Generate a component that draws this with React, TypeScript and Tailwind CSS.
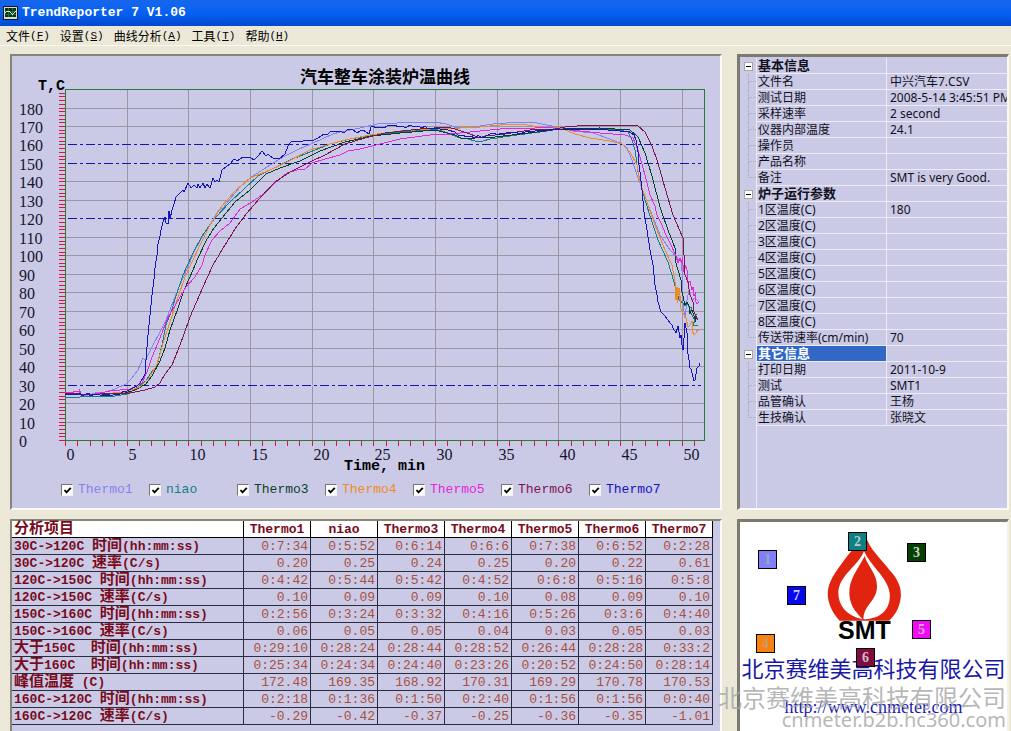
import React, { useState } from "react";

const MENU = [
  ["文件", "F"],
  ["设置", "S"],
  ["曲线分析", "A"],
  ["工具", "T"],
  ["帮助", "H"],
];

type Series = { name: string; stroke: string; text: string; points: string };

const SERIES: Series[] = [
  {
    name: "Thermo1",
    stroke: "#8484ee",
    text: "text-[#8484ee]",
    points:
      "65,393 78,394 85,396 95,393 105,392 115,389 126,384 132,378 138,370 143,358 145,360 148,355 152,347 160,332 166,320 173,302 179,287 187,269 194,252 202,237 213,220 218,211 223,208 230,199 240,187 250,178 267,167 283,157 297,150 313,143 333,134 340,132 360,128 377,124 397,123 420,122 435,122 446,124 457,128 473,127 493,124 520,122 537,123 557,127 573,131 593,133 610,139 622,144 627,148 632,160 637,175 641,186 650,210 660,235 670,250 681,262 683,280 682,296 685,318 687,300 689,290 692,300 695,298 699,302",
  },
  {
    name: "niao",
    stroke: "#138089",
    text: "text-[#138089]",
    points:
      "65,397 80,397 90,396 105,397 115,396 127,394 138,387 146,381 150,374 157,366 162,345 166,325 171,312 177,293 183,275 192,255 202,236 215,218 230,202 245,188 258,176 270,170 290,160 310,152 330,144 350,139 375,135 400,132 435,129 445,132 460,138 468,139 475,141 483,141 490,139 510,136 540,132 560,129 590,128 620,130 628,132 632,140 635,150 638,172 645,200 652,222 658,240 668,262 674,282 679,300 683,303 685,306 687,303 689,307 692,308 690,312 695,320 693,325 698,325",
  },
  {
    name: "Thermo3",
    stroke: "#0b4028",
    text: "text-[#0b4028]",
    points:
      "65,394 95,395 125,393 135,390 146,384 152,376 160,361 165,348 170,330 178,308 184,290 190,277 198,258 206,241 214,228 222,218 235,202 250,190 266,174 280,168 300,161 320,151 345,142 372,136 400,133 435,130 455,135 463,139 475,138 495,137 520,134 545,131 560,129 600,128 630,130 638,137 645,153 652,176 660,207 668,230 675,248 675,260 678,270 681,280 681,287 685,305 687,302 690,308 689,314 692,310 696,322 695,317 698,320",
  },
  {
    name: "Thermo4",
    stroke: "#f08a28",
    text: "text-[#f08a28]",
    points:
      "65,393 90,395 125,392 140,387 150,377 157,364 164,340 170,322 177,300 185,277 192,262 200,245 210,225 222,206 235,191 250,178 270,170 285,163 310,150 330,144 345,140 370,135 400,131 430,129 460,128 480,127 500,125 520,124 540,127 560,128 568,131 575,134 590,138 610,141 622,144 630,152 637,165 640,182 648,205 655,225 665,250 672,265 675,282 676,300 677,287 677,303 679,288 679,300 681,296 680,305 682,312 686,318 688,327 690,325 692,321 692,330 694,335 696,333 697,330 699,330",
  },
  {
    name: "Thermo5",
    stroke: "#e426dc",
    text: "text-[#e426dc]",
    points:
      "65,392 72,393 75,391 79,392 79,389 81,394 95,394 110,391 130,389 142,383 147,372 152,357 160,338 168,317 175,306 180,297 186,287 195,277 202,265 205,255 212,240 220,231 230,223 240,209 252,202 265,193 275,183 287,173 300,169 304,170 312,163 325,159 340,155 348,151 360,149 380,144 400,139 430,135 450,134 470,132 490,130 510,128 535,128 545,127 560,129 580,131 600,133 625,135 633,138 638,150 645,175 650,195 655,206 657,215 662,225 665,233 671,245 676,256 678,263 680,258 682,263 682,257 684,272 685,265 687,270 687,283 690,281 692,290 693,287 694,296 696,292 695,300 697,304 699,302",
  },
  {
    name: "Thermo6",
    stroke: "#7d1550",
    text: "text-[#7d1550]",
    points:
      "65,393 90,395 100,394 130,393 145,390 155,387 160,383 165,374 172,365 178,350 183,337 190,317 196,303 203,287 213,265 225,245 235,229 247,213 260,198 275,182 290,172 310,162 325,155 345,144 365,138 385,133 420,129 448,127 458,130 470,134 480,138 485,136 505,134 530,130 555,129 565,127 590,125 620,125 638,126 645,132 652,146 658,163 665,188 673,215 683,238 684,255 685,275 688,282 690,295 693,302 694,312 698,320 695,315 697,314",
  },
  {
    name: "Thermo7",
    stroke: "#1414c0",
    text: "text-[#1414c0]",
    points:
      "65,394 73,394 76,395 80,393 82,396 86,394 89,393 90,396 95,394 100,395 113,395 120,394 124,391 127,391 133,388 137,386 140,383 143,378 145,374 146,360 147,347 148,335 149,325 150,315 152,295 154,279 155,268 157,255 158,244 160,236 161,230 163,222 165,217 166,223 168,224 169,211 170,219 172,210 174,204 176,197 180,193 183,190 184,192 188,183 191,188 194,185 197,188 198,184 200,188 203,183 205,188 207,184 210,188 213,178 215,182 217,180 219,182 222,170 226,167 231,163 233,160 235,159 237,161 240,159 243,157 250,157 254,160 257,157 259,155 262,151 266,156 268,154 270,156 273,158 279,159 285,154 288,146 291,142 295,141 300,142 306,140 312,141 318,138 324,134 327,135 330,132 335,131 340,131 344,133 347,130 352,129 357,133 360,131 363,130 366,132 369,134 371,127 373,126 376,128 380,127 384,128 387,126 395,125 398,127 402,126 406,128 410,125 414,127 418,126 422,128 425,126 428,129 432,128 440,129 448,130 455,132 459,136 463,135 466,137 470,136 475,138 478,135 482,138 486,136 490,134 494,133 497,135 502,133 506,133 515,132 520,134 525,132 535,131 548,130 560,129 572,130 580,129 590,130 600,129 608,130 615,130 620,131 628,131 634,135 636,140 638,152 639,165 640,172 642,190 644,212 647,230 650,250 653,265 654,275 655,285 657,295 658,302 661,312 665,316 668,320 670,323 672,325 673,328 676,333 678,326 680,338 681,335 682,345 683,350 684,338 685,323 687,333 687,348 689,360 689,367 691,369 694,381 695,380 697,368 699,366 700,363",
  },
];

const PLOT = { left: 65, right: 704, top: 89, bottom: 440 };
const xAt = (minute: number) => Math.round(PLOT.left + minute * 12.33) + 0.5;
const yAt = (temp: number) => Math.round(PLOT.bottom - temp * 1.847) + 0.5;
const range = (from: number, to: number, step: number) => {
  const out: number[] = [];
  for (let v = from; v <= to; v += step) out.push(v);
  return out;
};

const HAN = /([\u4e00-\u9fff]+)/;

function BoldMixed({ text }: { text: string }) {
  return (
    <>
      {text.split(HAN).map((part, i) => (
        <span key={i} className={HAN.test(part) ? "text-[15px]" : "text-[13px]"}>
          {part}
        </span>
      ))}
    </>
  );
}

function TitleBar() {
  return (
    <header className="flex h-[26px] items-center gap-1 bg-gradient-to-b from-[#1767ec] via-[#0560f4] to-[#0349cf] px-[3px]">
      <svg width="15" height="14" viewBox="0 0 15 14" shapeRendering="crispEdges">
        <rect x="0.5" y="0.5" width="14" height="13" rx="1" fill="#d8dcd0" stroke="#101820" />
        <rect x="2" y="2" width="11" height="9" fill="#0a3418" />
        <path d="M2 5.5H13M2 8.5H13M5.500 2V11M9.500 2V11" stroke="#236b3a" fill="none" />
        <path d="M2 7L4 5H6L9 8H10L13 5" stroke="#e8f4c8" fill="none" />
      </svg>
      <h1 className="font-['Liberation_Mono','Noto_Sans_CJK_SC',monospace] text-[13px] font-bold whitespace-pre text-white">
        TrendReporter 7 V1.06
      </h1>
    </header>
  );
}

function MenuBar() {
  return (
    <nav className="flex h-5 items-center border-b border-[#faf9f2] px-px">
      {MENU.map(([label, key]) => (
        <button key={key} type="button" className="flex items-center px-[5px] text-[12px] leading-4 text-black">
          {label}
          <span className="font-['Liberation_Mono',monospace] text-[11px]">
            (<u>{key}</u>)
          </span>
        </button>
      ))}
    </nav>
  );
}

function Chart({ visible }: { visible: boolean[] }) {
  return (
    <svg viewBox="12 56 708 418" className="block w-full" role="img" aria-label="汽车整车涂装炉温曲线">
      <g shapeRendering="crispEdges" fill="none">
        {range(5, 50, 5).map((m) => (
          <line key={m} x1={xAt(m)} x2={xAt(m)} y1={PLOT.top} y2={PLOT.bottom} stroke="#9898a4" />
        ))}
        {range(10, 180, 10).map((t) => (
          <line key={t} x1={PLOT.left} x2={PLOT.right} y1={yAt(t)} y2={yAt(t)} stroke="#9898a4" />
        ))}
        {[30, 120, 150, 160].map((t) => (
          <g key={t}>
            <line x1={PLOT.left} x2={PLOT.right} y1={yAt(t)} y2={yAt(t)} stroke="#cbcae6" />
            <line x1={68} x2={701} y1={yAt(t)} y2={yAt(t)} stroke="#1414b4" strokeDasharray="9 3 3 3" />
          </g>
        ))}
        {range(0, 188, 2).map((t) => (
          <line key={t} x1={59} x2={65} y1={yAt(t)} y2={yAt(t)} stroke="#dc1440" />
        ))}
        <rect x={65.5} y={89.5} width={639} height={351} stroke="#27793c" />
        {range(0, 51, 1).map((m) => (
          <line key={m} x1={xAt(m)} x2={xAt(m)} y1={441} y2={446} stroke="#dc1440" />
        ))}
      </g>
      <g fill="none" strokeWidth="1" shapeRendering="crispEdges">
        {SERIES.map((s, i) => visible[i] && <polyline key={s.name} points={s.points} stroke={s.stroke} />)}
      </g>
      <g className="fill-[#14142c] font-['Liberation_Serif',serif] text-[16px]">
        {range(0, 180, 10).map((t) => (
          <text key={t} x={19} y={yAt(t) + 6}>
            {t}
          </text>
        ))}
        {range(0, 50, 5).map((m) => (
          <text key={m} x={xAt(m) + 1} y={460}>
            {m}
          </text>
        ))}
      </g>
      <g className="fill-black font-['Liberation_Mono','Noto_Sans_CJK_SC',monospace] text-[15px] font-bold">
        <text x={38} y={90}>T,C</text>
        <text x={344} y={470}>Time, min</text>
      </g>
      <text x={300} y={83} className="fill-black font-['Noto_Sans_CJK_SC',sans-serif] text-[17px] font-bold">
        汽车整车涂装炉温曲线
      </text>
    </svg>
  );
}

function ChartPanel() {
  const [visible, setVisible] = useState(SERIES.map(() => true));
  return (
    <section className="border-2 border-t-[#87857a] border-r-[#fafaf6] border-b-[#fafaf6] border-l-[#87857a] bg-[#cbcae6] pb-2.5">
      <Chart visible={visible} />
      <div className="flex pt-2 pl-[49px]">
        {SERIES.map((s, i) => (
          <label key={s.name} className="relative flex h-4 w-[88px] items-center gap-[5px]">
            <input
              type="checkbox"
              checked={visible[i]}
              onChange={() => setVisible(visible.map((v, j) => (j === i ? !v : v)))}
              className="sr-only"
            />
            <span className="flex size-3 items-center justify-center border border-t-[#77756c] border-r-[#f4f4f0] border-b-[#f4f4f0] border-l-[#77756c] bg-white">
              <svg width="9" height="9" viewBox="0 0 9 9" className={visible[i] ? "shrink-0" : "invisible shrink-0"}>
                <path d="M1.500 4L3.500 6.300L7.800 1.800" fill="none" stroke="#000" strokeWidth="1.900" />
              </svg>
            </span>
            <span className={`font-['Liberation_Mono',monospace] text-[13px] ${s.text}`}>{s.name}</span>
          </label>
        ))}
      </div>
    </section>
  );
}

type Group = { title: string; selected?: boolean; rows: [string, string][] };

const GROUPS: Group[] = [
  {
    title: "基本信息",
    rows: [
      ["文件名", "中兴汽车7.CSV"],
      ["测试日期", "2008-5-14 3:45:51 PM"],
      ["采样速率", "2 second"],
      ["仪器内部温度", "24.1"],
      ["操作员", ""],
      ["产品名称", ""],
      ["备注", "SMT is very Good."],
    ],
  },
  {
    title: "炉子运行参数",
    rows: [
      ["1区温度(C)", "180"],
      ["2区温度(C)", ""],
      ["3区温度(C)", ""],
      ["4区温度(C)", ""],
      ["5区温度(C)", ""],
      ["6区温度(C)", ""],
      ["7区温度(C)", ""],
      ["8区温度(C)", ""],
      ["传送带速率(cm/min)", "70"],
    ],
  },
  {
    title: "其它信息",
    selected: true,
    rows: [
      ["打印日期", "2011-10-9"],
      ["测试", "SMT1"],
      ["品管确认", "王杨"],
      ["生技确认", "张晓文"],
    ],
  },
];

function PropertyPanel() {
  return (
    <section className="flex flex-col overflow-hidden border-t-3 border-r-2 border-b-2 border-l-3 border-t-[#7d7b70] border-r-[#fafaf6] border-b-[#fafaf6] border-l-[#7d7b70] bg-[#cbcae6] pt-px">
      <table className="w-full table-fixed border-separate border-spacing-0 font-['Noto_Sans','Noto_Sans_CJK_SC',sans-serif] text-[12px] leading-[15px] text-[#10101c]">
        <colgroup>
          <col className="w-[17px]" />
          <col className="w-[130px]" />
          <col />
        </colgroup>
        {GROUPS.map((g) => (
          <tbody key={g.title}>
            <tr className="h-4">
              <td className="border-r border-[#ecebf6] p-0">
                <button
                  type="button"
                  aria-label={g.title}
                  className="ml-1 flex size-[9px] items-center justify-center border border-[#a8a8a0] bg-white"
                >
                  <span className="h-px w-[5px] bg-black" />
                </button>
              </td>
              <th
                className={
                  g.selected
                    ? "border-r border-b border-[#ecebf6] bg-[#3168c6] p-0 pl-px text-left text-[13px] font-bold whitespace-nowrap text-white"
                    : "border-r border-b border-[#ecebf6] p-0 pl-px text-left text-[13px] font-bold whitespace-nowrap"
                }
              >
                {g.title}
              </th>
              <td className="border-b border-[#ecebf6] p-0" />
            </tr>
            {g.rows.map(([label, value], i) => (
              <tr key={label} className="h-4">
                <td className="border-r border-[#ecebf6] p-0">
                  <div className="ml-2 flex h-4 flex-col">
                    <span className="h-2 border-b border-l border-dotted border-[#a9a8bc]" />
                    {i < g.rows.length - 1 && <span className="h-2 border-l border-dotted border-[#a9a8bc]" />}
                  </div>
                </td>
                <th className="border-r border-b border-[#ecebf6] p-0 pt-px pl-px text-left leading-[14px] font-normal whitespace-nowrap">
                  {label}
                </th>
                <td className="border-b border-[#ecebf6] p-0 pt-px pl-[3px] leading-[14px] whitespace-nowrap">
                  {value}
                </td>
              </tr>
            ))}
          </tbody>
        ))}
      </table>
      <div className="w-[17px] flex-1 border-r border-[#ecebf6]" />
    </section>
  );
}

const COLUMNS = ["Thermo1", "niao", "Thermo3", "Thermo4", "Thermo5", "Thermo6", "Thermo7"];
const ROWS: [string, string[]][] = [
  ["30C->120C 时间(hh:mm:ss)", ["0:7:34", "0:5:52", "0:6:14", "0:6:6", "0:7:38", "0:6:52", "0:2:28"]],
  ["30C->120C 速率(C/s)", ["0.20", "0.25", "0.24", "0.25", "0.20", "0.22", "0.61"]],
  ["120C->150C 时间(hh:mm:ss)", ["0:4:42", "0:5:44", "0:5:42", "0:4:52", "0:6:8", "0:5:16", "0:5:8"]],
  ["120C->150C 速率(C/s)", ["0.10", "0.09", "0.09", "0.10", "0.08", "0.09", "0.10"]],
  ["150C->160C 时间(hh:mm:ss)", ["0:2:56", "0:3:24", "0:3:32", "0:4:16", "0:5:26", "0:3:6", "0:4:40"]],
  ["150C->160C 速率(C/s)", ["0.06", "0.05", "0.05", "0.04", "0.03", "0.05", "0.03"]],
  ["大于150C  时间(hh:mm:ss)", ["0:29:10", "0:28:24", "0:28:44", "0:28:52", "0:26:44", "0:28:28", "0:33:2"]],
  ["大于160C  时间(hh:mm:ss)", ["0:25:34", "0:24:34", "0:24:40", "0:23:26", "0:20:52", "0:24:50", "0:28:14"]],
  ["峰值温度 (C)", ["172.48", "169.35", "168.92", "170.31", "169.29", "170.78", "170.53"]],
  ["160C->120C 时间(hh:mm:ss)", ["0:2:18", "0:1:36", "0:1:50", "0:2:40", "0:1:56", "0:1:56", "0:0:40"]],
  ["160C->120C 速率(C/s)", ["-0.29", "-0.42", "-0.37", "-0.25", "-0.36", "-0.35", "-1.01"]],
];

function AnalysisPanel() {
  return (
    <section className="border-t-2 border-r-2 border-l-2 border-t-[#87857a] border-r-[#fafaf6] border-l-[#87857a] bg-[#cbcae6]">
      <table className="table-fixed border-separate border-spacing-0 font-['Liberation_Mono','Noto_Sans_CJK_SC',monospace] text-[13px] leading-4">
        <colgroup>
          <col className="w-[232px]" />
          {COLUMNS.map((c) => (
            <col key={c} className="w-[67px]" />
          ))}
        </colgroup>
        <thead>
          <tr className="h-[17px] bg-white text-[#780c1c]">
            <th className="border-r border-b border-black p-0 pl-0.5 text-left font-bold">
              <div className="flex h-4 items-center pt-px leading-4">
                <BoldMixed text="分析项目" />
              </div>
            </th>
            {COLUMNS.map((c) => (
              <th key={c} className="w-[67px] border-r border-b border-black p-0 pt-px text-center leading-[15px] font-bold">
                {c}
              </th>
            ))}
          </tr>
        </thead>
        <tbody>
          {ROWS.map(([label, values]) => (
            <tr key={label} className="h-[17px]">
              <th className="w-[232px] border-r border-b border-[#2c2c40] p-0 pl-0.5 text-left font-bold whitespace-pre text-[#780c1c]">
                <div className="flex h-4 items-center pt-px leading-4">
                  <BoldMixed text={label} />
                </div>
              </th>
              {values.map((v, i) => (
                <td
                  key={i}
                  className="border-r border-b border-[#2c2c40] p-0 pt-0.5 pr-0.5 text-right leading-[14px] text-[#a8503f]"
                >
                  {v}
                </td>
              ))}
            </tr>
          ))}
        </tbody>
      </table>
    </section>
  );
}

const PINS = [
  { n: 1, cls: "left-[18px] top-[28px] bg-[#8080fa] text-[#a4a4c0]" },
  { n: 2, cls: "left-[108px] top-[10px] bg-[#0c8084] text-[#b8ccc8]" },
  { n: 3, cls: "left-[167px] top-[21px] bg-[#064006] text-[#c8d4c0]" },
  { n: 4, cls: "left-[16px] top-[112px] bg-[#fa8010] text-[#c0a070]" },
  { n: 5, cls: "left-[172px] top-[98px] bg-[#f00cf0] text-[#d8a8dc]" },
  { n: 6, cls: "left-[116px] top-[126px] bg-[#800c40] text-[#d4b8c8]" },
  { n: 7, cls: "left-[47px] top-[64px] bg-[#0808f0] text-[#c8c8f0]" },
];

function LogoPanel() {
  return (
    <section className="relative border-t-3 border-r-2 border-l-3 border-t-[#7d7b70] border-r-[#f4f3ea] border-l-[#7d7b70] bg-white">
      <div className="flex flex-col items-center pt-[13px]">
        <div className="flex flex-col items-center pr-[18px]">
          <svg width="75" height="86" viewBox="290 60 225 258">
            <path
              fill="#e02410"
              d="M405 60C418 105 452 130 480 168C506 196 514 222 511 250C507 280 493 303 476 317H328C306 295 288 258 293 225C298 190 325 160 348 127C372 92 398 90 405 60Z"
            />
            <path
              fill="#fff"
              d="M401 108C387 150 326 180 324 232C323 270 348 302 395 313H405C462 310 482 272 478 235C474 190 420 152 401 108Z"
            />
            <path
              fill="#e02410"
              d="M403 123C384 163 355 190 357 238C359 278 383 297 400 317C396 270 440 262 440 213C440 176 414 158 403 123Z"
            />
          </svg>
          <p className="font-['Liberation_Sans',sans-serif] text-[25px] leading-[18px] font-bold text-black">SMT</p>
        </div>
        <p className="mt-3.5 font-['Noto_Sans_CJK_SC',sans-serif] text-[22px] leading-7 whitespace-nowrap text-[#1818a8]">
          北京赛维美高科技有限公司
        </p>
        <a
          href="http://www.cnmeter.com"
          className="mt-4 font-['Liberation_Serif',serif] text-[18px] leading-5 text-[#1c1cb0]"
        >
          http://www.cnmeter.com
        </a>
      </div>
      {PINS.map((p) => (
        <span
          key={p.n}
          className={`absolute flex size-[19px] items-center justify-center border border-black font-['Liberation_Serif',serif] text-[14px] leading-4 font-bold ${p.cls}`}
        >
          {p.n}
        </span>
      ))}
      <div className="absolute right-0 bottom-0 flex flex-col items-end pr-px whitespace-nowrap text-[#a4a4a4]/80">
        <span className="font-['Noto_Sans_CJK_SC',sans-serif] text-[24px] leading-6">北京赛维美高科技有限公司</span>
        <span className="font-['Noto_Sans',sans-serif] text-[20px] leading-[22px]">cnmeter.b2b.hc360.com</span>
      </div>
    </section>
  );
}

export default function App() {
  return (
    <div className="flex min-h-screen flex-col bg-[#ebe8d7] font-['Noto_Sans_CJK_SC',sans-serif]">
      <TitleBar />
      <MenuBar />
      <main className="grid flex-1 grid-cols-[minmax(0,1fr)_272px] grid-rows-[auto_1fr] gap-x-[15px] gap-y-[9px] pt-2 pr-0.5 pl-2.5">
        <ChartPanel />
        <PropertyPanel />
        <AnalysisPanel />
        <LogoPanel />
      </main>
    </div>
  );
}
